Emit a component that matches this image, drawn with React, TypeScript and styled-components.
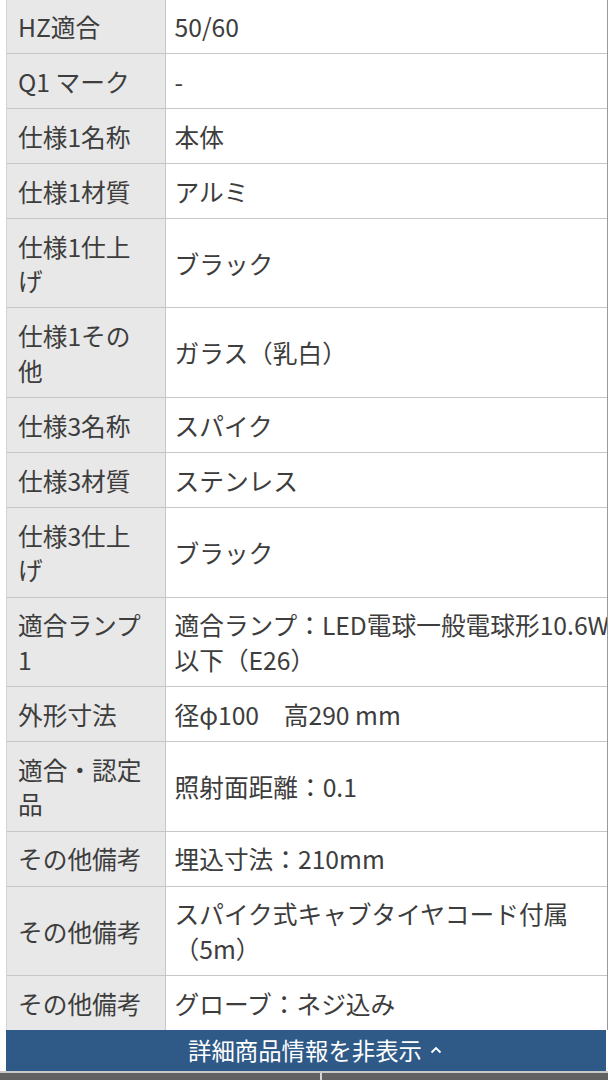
import styled, { createGlobalStyle } from 'styled-components';

const GlobalStyle = createGlobalStyle`
    html, body {
        margin: 0;
        padding: 0;
        background: #fff;
    }
    body {
        font-family: "Noto Sans CJK JP", "Noto Sans", sans-serif;
        color: #3d3d3d;
        overflow: hidden;
    }
`;

const Page = styled.div`
    width: 608px;
    height: 1080px;
    display: flex;
    flex-direction: column;
    overflow: hidden;
`;

const SpecWrapper = styled.div`
    flex: none;
    margin: -2px 2px 0 6px;
    width: 600px;
    overflow: hidden;
    border-right: 1px solid #9a9a9a;
    border-left: 1px solid #d4d4d4;
`;

const SpecTable = styled.table`
    width: 100%;
    border-collapse: collapse;
    table-layout: fixed;
    font-size: 24.7px;
    line-height: 34.6px;
`;

const Row = styled.tr`
    border-top: 1px solid #c6c6c6;
`;

const LabelCell = styled.th`
    width: 158px;
    box-sizing: border-box;
    padding: 9.7px 11px;
    background: #e8e8e8;
    border-right: 1px solid #c6c6c6;
    text-align: left;
    font-weight: 400;
    vertical-align: middle;
    color: #3d3d3d;
`;

const ValueCell = styled.td<{ $nowrap?: boolean }>`
    padding: 9.7px 11px 9.7px 9px;
    background: #fff;
    vertical-align: middle;
    white-space: ${(p) => (p.$nowrap ? 'nowrap' : 'normal')};
    color: #3d3d3d;
`;

const ToggleBar = styled.button`
    flex: none;
    margin: 0 2px 0 6px;
    width: 600px;
    height: 41px;
    border: none;
    background: #2f5a87;
    color: #fff;
    font-family: "Noto Sans CJK JP", sans-serif;
    font-size: 23.4px;
    display: flex;
    align-items: center;
    justify-content: center;
    gap: 8px;
    padding: 0 0 2px 18px;
    cursor: pointer;
`;

const TabBar = styled.div`
    flex: none;
    display: grid;
    grid-template-columns: 322px 1fr;
    height: 48px;
    border-top: 2px solid #c9c9c9;
    background: #626262;
`;

const Tab = styled.div<{ $first?: boolean }>`
    border-right: ${(p) => (p.$first ? '2px solid #d6d6d6' : 'none')};
`;

interface SpecRow {
    label: string;
    value: string[];
    nowrap?: boolean;
}

const specs: SpecRow[] = [
    { label: 'HZ適合', value: ['50/60'] },
    { label: 'Q1 マーク', value: ['-'] },
    { label: '仕様1名称', value: ['本体'] },
    { label: '仕様1材質', value: ['アルミ'] },
    { label: '仕様1仕上げ', value: ['ブラック'] },
    { label: '仕様1その他', value: ['ガラス（乳白）'] },
    { label: '仕様3名称', value: ['スパイク'] },
    { label: '仕様3材質', value: ['ステンレス'] },
    { label: '仕様3仕上げ', value: ['ブラック'] },
    { label: '適合ランプ1', value: ['適合ランプ：LED電球一般電球形10.6W', '以下（E26）'], nowrap: true },
    { label: '外形寸法', value: ['径φ100　高290 mm'] },
    { label: '適合・認定品', value: ['照射面距離：0.1'] },
    { label: 'その他備考', value: ['埋込寸法：210mm'] },
    { label: 'その他備考', value: ['スパイク式キャブタイヤコード付属（5m）'] },
    { label: 'その他備考', value: ['グローブ：ネジ込み'] },
];

const ChevronUp = () => (
    <svg width="12" height="8" viewBox="0 0 12 8" fill="none">
        <polyline points="1.5,6.5 6,2 10.5,6.5" stroke="#fff" strokeWidth="1.8" />
    </svg>
);

const App = () => {
    return (
        <Page>
            <GlobalStyle />
            <SpecWrapper>
                <SpecTable>
                    <tbody>
                        {specs.map((s, i) => (
                            <Row key={i}>
                                <LabelCell>{s.label}</LabelCell>
                                <ValueCell $nowrap={s.nowrap}>
                                    {s.value.map((line, j) => (
                                        <span key={j}>
                                            {j > 0 && <br />}
                                            {line}
                                        </span>
                                    ))}
                                </ValueCell>
                            </Row>
                        ))}
                    </tbody>
                </SpecTable>
            </SpecWrapper>
            <ToggleBar>
                詳細商品情報を非表示
                <ChevronUp />
            </ToggleBar>
            <TabBar>
                <Tab $first />
                <Tab />
            </TabBar>
        </Page>
    );
};

export default App;
